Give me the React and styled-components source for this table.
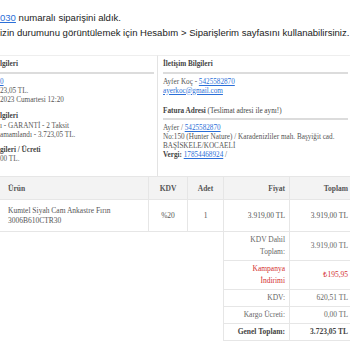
import React from 'react';
import styled, { createGlobalStyle } from 'styled-components';

const GlobalStyle = createGlobalStyle`
  html, body {
    margin: 0;
    padding: 0;
    background: #fff;
    overflow: hidden;
  }
`;

const Mail = styled.div`
  width: 350px;
  height: 350px;
  overflow: hidden;
  font-family: "Liberation Serif", "Times New Roman", serif;
  color: #555;
`;

const Intro = styled.div`
  padding-top: 9.5px;
  font-family: "Liberation Sans", Arial, sans-serif;
  font-size: 9.55px;
  line-height: 15px;
  color: #222;
  white-space: nowrap;
`;

const Link = styled.a`
  color: #2b6fd8;
  text-decoration: underline;
`;

const InfoGrid = styled.div`
  margin-top: 15.5px;
  display: grid;
  grid-template-columns: 158px 1fr;
  height: 121px;
`;

const Box = styled.div`
  border-top: 1px solid #eee;
  border-right: ${(p) => (p.$divider ? '1px solid #e3e3e3' : 'none')};
  padding: ${(p) => (p.$divider ? '3px 3px 0 0' : '3px 2px 0 5px')};
  font-size: 7.2px;
  white-space: nowrap;
`;

const Title = styled.div`
  font-weight: bold;
  line-height: 10px;
  color: #444;
  margin-top: ${(p) => p.$gap || 0}px;
  padding-bottom: ${(p) => (p.$underline ? '2.5px' : '0')};
  border-bottom: ${(p) => (p.$underline ? '2px solid #dcdcdc' : 'none')};
  margin-bottom: ${(p) => (p.$underline ? '4px' : '0')};

  span {
    font-weight: normal;
  }
`;

const Line = styled.div`
  line-height: 9px;
  margin-top: ${(p) => p.$gap || 0}px;

  b {
    color: #444;
  }
`;

const Table = styled.table`
  margin-left: -1px;
  width: 353px;
  border-collapse: collapse;
  table-layout: fixed;
  font-size: 7.5px;
  color: #555;
`;

const Th = styled.th`
  height: 22px;
  padding: 0 4px;
  background: #f3f3f3;
  border: 1px solid #e6e6e6;
  font-weight: bold;
  text-align: ${(p) => p.$align || 'left'};
  padding-left: ${(p) => (p.$first ? '8px' : '4px')};
`;

const Td = styled.td`
  height: 31px;
  padding: 0 4px;
  padding-left: ${(p) => (p.$first ? '8px' : '4px')};
  line-height: 10px;
  border: 1px solid #e6e6e6;
  text-align: ${(p) => p.$align || 'left'};
`;

const Blank = styled.td`
  border: none;
`;

const SumTd = styled.td`
  padding: 2px 4px;
  line-height: 12px;
  border: 1px solid #e6e6e6;
  text-align: right;
  color: ${(p) => (p.$red ? '#d32f2f' : p.$strong ? '#444' : '#666')};
  font-weight: ${(p) => (p.$strong ? 'bold' : 'normal')};
`;

const summary = [
  { label: <>KDV Dahil<br />Toplam:</>, value: '3.919,00 TL' },
  { label: <>Kampanya<br />İndirimi</>, value: '₺195,95', red: true },
  { label: 'KDV:', value: '620,51 TL' },
  { label: 'Kargo Ücreti:', value: '0,00 TL' },
  { label: 'Genel Toplam:', value: '3.723,05 TL', strong: true },
];

const App = () => {
  return (
    <Mail>
      <GlobalStyle />
      <Intro>
        <div><Link>030</Link> numaralı siparişini aldık.</div>
        <div>izin durumunu görüntülemek için Hesabım &gt; Siparişlerim sayfasını kullanabilirsiniz.</div>
      </Intro>

      <InfoGrid>
        <Box $divider>
          <Title $underline>lgileri</Title>
          <Line><Link>0</Link></Line>
          <Line>23,05 TL.</Line>
          <Line>2023 Cumartesi 12:20</Line>
          <Title $gap={6}>lgileri</Title>
          <Line $gap={1}>ı - GARANTİ - 2 Taksit</Line>
          <Line>amamlandı - 3.723,05 TL.</Line>
          <Title $gap={5}>gileri / Ücreti</Title>
          <Line>00 TL.</Line>
        </Box>
        <Box>
          <Title $underline>İletişim Bilgileri</Title>
          <Line>Ayfer Koç - <Link>5425582870</Link></Line>
          <Line><Link>ayerkoc@gmail.com</Link></Line>
          <Title $underline $gap={10}>Fatura Adresi <span>(Teslimat adresi ile aynı!)</span></Title>
          <Line>Ayfer / <Link>5425582870</Link></Line>
          <Line>No:150 (Hunter Nature) / Karadenizliler mah. Başyiğit cad.</Line>
          <Line>BAŞİSKELE/KOCAELİ</Line>
          <Line><b>Vergi:</b> <Link>17854468924</Link> /</Line>
        </Box>
      </InfoGrid>

      <Table>
        <colgroup>
          <col style={{ width: 149 }} />
          <col style={{ width: 39 }} />
          <col style={{ width: 36 }} />
          <col style={{ width: 66 }} />
          <col style={{ width: 63 }} />
        </colgroup>
        <thead>
          <tr>
            <Th $first>Ürün</Th>
            <Th $align="center">KDV</Th>
            <Th $align="center">Adet</Th>
            <Th $align="right">Fiyat</Th>
            <Th $align="right">Toplam</Th>
          </tr>
        </thead>
        <tbody>
          <tr>
            <Td $first>Kumtel Siyah Cam Ankastre Fırın<br />3006B610CTR30</Td>
            <Td $align="center">%20</Td>
            <Td $align="center">1</Td>
            <Td $align="right">3.919,00 TL</Td>
            <Td $align="right">3.919,00 TL</Td>
          </tr>
        </tbody>
        <tfoot>
          {summary.map((row, i) => (
            <tr key={i}>
              <Blank colSpan={3} />
              <SumTd $red={row.red} $strong={row.strong}>{row.label}</SumTd>
              <SumTd $red={row.red} $strong={row.strong}>{row.value}</SumTd>
            </tr>
          ))}
        </tfoot>
      </Table>
    </Mail>
  );
};

export default App;
